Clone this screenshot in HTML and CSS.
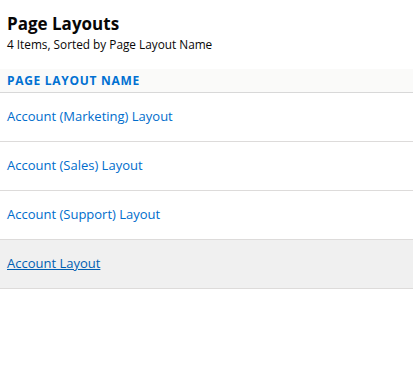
FILE: index.html
```html
<!DOCTYPE html>
<html lang="en">
<head>
    <meta charset="UTF-8">
    <meta name="viewport" content="width=device-width, initial-scale=1.0">
    <title>Page Layouts</title>
    <link rel="stylesheet" href="styles.css">
</head>
<body>
    <div class="header">
        <h1>Page Layouts</h1>
        <p class="info">4 Items, Sorted by Page Layout Name</p>
    </div>
    <table class="list">
        <thead>
            <tr><th>Page Layout Name</th></tr>
        </thead>
        <tbody>
            <tr><td><a href="#">Account (Marketing) Layout</a></td></tr>
            <tr><td><a href="#">Account (Sales) Layout</a></td></tr>
            <tr><td><a href="#">Account (Support) Layout</a></td></tr>
            <tr class="hover"><td><a href="#">Account Layout</a></td></tr>
        </tbody>
    </table>
</body>
</html>
```
FILE: styles.css
```css
body {
    font-family: "Open Sans", Arial, sans-serif;
    margin: 0;
    padding: 0;
    background-color: white;
    color: #080707;
}

.header {
    padding: 12px 7px 0 7px;
    height: 58px;
    box-sizing: border-box;
}

h1 {
    margin: 0;
    font-size: 17px;
    font-weight: bold;
    line-height: 24px;
}

.info {
    margin: 0;
    font-size: 11.8px;
    line-height: 16px;
}

.list {
    width: 100%;
    border-collapse: collapse;
    margin-top: 11px;
}

.list th {
    text-align: left;
    background-color: #fafaf9;
    color: #0070d2;
    font-size: 12px;
    font-weight: bold;
    text-transform: uppercase;
    letter-spacing: 0.7px;
    height: 23px;
    padding: 0 7px;
    border-bottom: 1px solid #d8d8d8;
}

.list td {
    height: 46px;
    padding: 0 7px 2px 7px;
    border-bottom: 1px solid #dddbda;
    font-size: 13px;
}

.list a {
    color: #006dcc;
    text-decoration: none;
}

.list tr.hover td {
    background-color: #f0f0f0;
}

.list tr.hover a {
    color: #005fb2;
    text-decoration: underline;
}
```
